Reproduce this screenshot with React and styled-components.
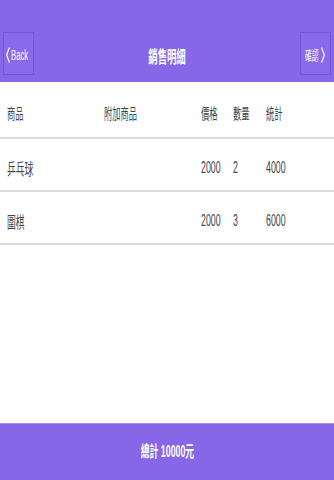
import styled, { createGlobalStyle } from 'styled-components';

const GlobalStyle = createGlobalStyle`
  html, body {
    margin: 0;
    padding: 0;
    background: #ffffff;
  }
  body {
    font-family: "Liberation Sans", "Noto Sans CJK TC", sans-serif;
  }
  #root {
    min-height: 100vh;
  }
`;

const items = [
  { name: '乒乓球', extra: '', price: 2000, qty: 2 },
  { name: '圍棋', extra: '', price: 2000, qty: 3 },
];

export default function App() {
  const total = items.reduce((sum, it) => sum + it.price * it.qty, 0);

  return (
    <>
      <GlobalStyle />
      <Page>
        <Header>
          <NavButton>
            <Chevron viewBox="0 0 4 16">
              <path d="M3.5 0.5 L0.6 8 L3.5 15.5" />
            </Chevron>
            <Squeeze $w={21}>
              <Narrow $size={14}>Back</Narrow>
            </Squeeze>
          </NavButton>
          <Title>
            <Narrow $size={17} $origin="center" $bold>銷售明細</Narrow>
          </Title>
          <NavButton $right>
            <Squeeze $w={14}>
              <Narrow $size={13} $scale={0.52}>確認</Narrow>
            </Squeeze>
            <Chevron viewBox="0 0 4 16">
              <path d="M0.5 0.5 L3.4 8 L0.5 15.5" />
            </Chevron>
          </NavButton>
        </Header>

        <Table>
          <Row $head>
            <Cell><Narrow $size={15}>商品</Narrow></Cell>
            <Cell><Narrow $size={15}>附加商品</Narrow></Cell>
            <Cell><Narrow $size={15}>價格</Narrow></Cell>
            <Cell><Narrow $size={15}>數量</Narrow></Cell>
            <Cell><Narrow $size={15}>統計</Narrow></Cell>
          </Row>
          {items.map((it) => (
            <Row key={it.name}>
              <Cell><Narrow>{it.name}</Narrow></Cell>
              <Cell><Narrow>{it.extra}</Narrow></Cell>
              <Cell><Narrow>{it.price}</Narrow></Cell>
              <Cell><Narrow>{it.qty}</Narrow></Cell>
              <Cell><Narrow>{it.price * it.qty}</Narrow></Cell>
            </Row>
          ))}
        </Table>

        <Footer>
          <Narrow $size={16} $origin="center" $bold>總計 {total}元</Narrow>
        </Footer>
      </Page>
    </>
  );
}

const Page = styled.div`
  display: flex;
  flex-direction: column;
  min-height: 100vh;
`;

const Header = styled.header`
  height: 82px;
  box-sizing: border-box;
  padding: 32px 3px 7px;
  background: #8766e7;
  display: flex;
  align-items: stretch;
  justify-content: space-between;
`;

const NavButton = styled.div`
  width: 31px;
  box-sizing: border-box;
  border: 1px solid #7454d9;
  background: #8a6aea;
  color: #ffffff;
  display: flex;
  align-items: center;
  justify-content: ${(p) => (p.$right ? 'flex-end' : 'flex-start')};
  gap: ${(p) => (p.$right ? '2px' : '1px')};
  padding: 2px ${(p) => (p.$right ? '5px' : '0')} 0 ${(p) => (p.$right ? '0' : '2px')};
`;

const Chevron = styled.svg`
  width: 4px;
  height: 16px;
  flex-shrink: 0;
  fill: none;
  stroke: #ffffff;
  stroke-width: 1.2;
`;

const Squeeze = styled.span`
  display: inline-block;
  width: ${(p) => p.$w}px;
  overflow: visible;
  white-space: nowrap;
`;

const Title = styled.div`
  flex: 1;
  display: flex;
  align-items: center;
  justify-content: center;
  padding-top: 4px;
  color: #ffffff;
`;

const Narrow = styled.span`
  display: inline-block;
  font-size: ${(p) => p.$size || 16}px;
  font-weight: ${(p) => (p.$bold ? 'bold' : 'normal')};
  transform: scaleX(${(p) => p.$scale || 0.55});
  transform-origin: ${(p) => p.$origin || 'left'} center;
  white-space: nowrap;
`;

const Table = styled.div`
  flex: 1;
  display: flex;
  flex-direction: column;
`;

const Row = styled.div`
  display: grid;
  grid-template-columns: 97px 97px 32px 33px 1fr;
  align-items: center;
  height: ${(p) => (p.$head ? '57px' : '53px')};
  box-sizing: border-box;
  padding: 6px 0 0 7px;
  border-bottom: 2px solid #dcdcdc;
  color: #444444;
`;

const Cell = styled.div`
  white-space: nowrap;
  overflow: visible;
`;

const Footer = styled.footer`
  height: 57px;
  box-sizing: border-box;
  background: #8766e7;
  border-top: 1px solid #a88ff0;
  color: #ffffff;
  display: flex;
  align-items: center;
  justify-content: center;
  padding-bottom: 4px;
`;
